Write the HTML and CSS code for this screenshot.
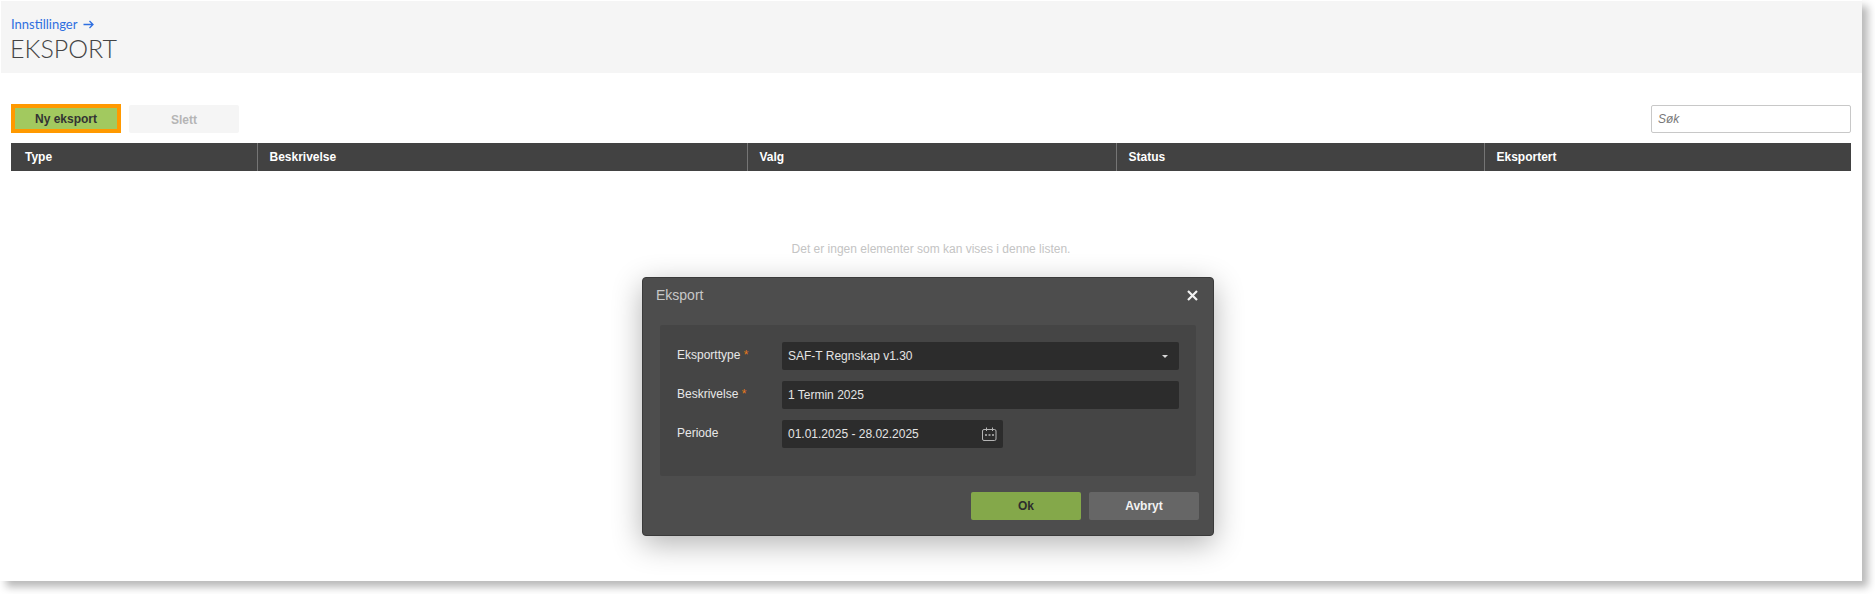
FILE: index.html
```html
<!DOCTYPE html>
<html lang="en">
<head>
    <meta charset="UTF-8">
    <title>Eksport</title>
    <link rel="stylesheet" href="styles.css">
</head>
<body>
    <div class="page">
        <div class="header">
            <a class="crumb" href="#">Innstillinger <span class="crumb-arrow">
                <svg width="11" height="9" viewBox="0 0 11 9"><path d="M0.5 4.5H10M6.5 1L10 4.5L6.5 8" fill="none" stroke="#2f6fe0" stroke-width="1.3"/></svg>
            </span></a>
            <h1>EKSPORT</h1>
        </div>

        <div class="toolbar">
            <button class="btn btn-new">Ny eksport</button>
            <button class="btn btn-delete">Slett</button>
            <input class="search" type="text" placeholder="Søk">
        </div>

        <table class="list-table">
            <thead>
                <tr>
                    <th class="col-type">Type</th>
                    <th class="col-desc">Beskrivelse</th>
                    <th class="col-choice">Valg</th>
                    <th class="col-status">Status</th>
                    <th>Eksportert</th>
                </tr>
            </thead>
        </table>
        <div class="empty">Det er ingen elementer som kan vises i denne listen.</div>

        <div class="dialog">
            <div class="dialog-title">
                <span>Eksport</span>
                <svg class="dialog-close" width="11" height="11" viewBox="0 0 11 11"><path d="M1 1L10 10M10 1L1 10" stroke="#f2f2f2" stroke-width="2.2"/></svg>
            </div>
            <div class="dialog-body">
                <div class="field">
                    <label>Eksporttype <span class="req">*</span></label>
                    <div class="control">
                        <span>SAF-T Regnskap v1.30</span>
                        <span class="caret"></span>
                    </div>
                </div>
                <div class="field">
                    <label>Beskrivelse <span class="req">*</span></label>
                    <div class="control"><span>1 Termin 2025</span></div>
                </div>
                <div class="field">
                    <label>Periode</label>
                    <div class="control control-date">
                        <span>01.01.2025 - 28.02.2025</span>
                        <svg width="15" height="15" viewBox="0 0 15 15" fill="none" stroke="#b5b5b5">
                            <rect x="0.5" y="2.5" width="13.5" height="11" rx="1.5"/>
                            <path d="M4.5 0.5V4M10.5 0.5V4"/>
                            <path d="M3 8H5M6.5 8H8.5M10 8H12" stroke-width="1.6"/>
                        </svg>
                    </div>
                </div>
            </div>
            <div class="dialog-actions">
                <button class="btn btn-ok">Ok</button>
                <button class="btn btn-cancel">Avbryt</button>
            </div>
        </div>
    </div>
</body>
</html>
```

FILE: styles.css
```css
/* Basic styling */
html, body {
    margin: 0;
    padding: 0;
    background-color: #fff;
    height: 100%;
    overflow: hidden;
}

body {
    font-family: "Liberation Sans", Arial, sans-serif;
    font-size: 12px;
}

.page {
    position: relative;
    width: 1862px;
    height: 581px;
    padding-top: 1px;
    box-sizing: border-box;
    background-color: #fff;
    box-shadow: 6px 6px 8px rgba(0, 0, 0, 0.28);
}

.header {
    height: 72px;
    margin-left: 1px;
    padding: 15px 0 0 10px;
    box-sizing: border-box;
    background-color: #f5f5f5;
}

.crumb {
    display: block;
    font-family: Lato, sans-serif;
    font-size: 13px;
    line-height: 16px;
    color: #2f6fe0;
    text-decoration: none;
}

.crumb-arrow {
    margin-left: 2px;
}

.header h1 {
    margin: 1px 0 0 -1px;
    font-family: Lato, sans-serif;
    font-size: 25px;
    font-weight: 300;
    line-height: 30px;
    color: #444;
}

.toolbar {
    display: flex;
    align-items: flex-end;
    gap: 8px;
    height: 29px;
    margin: 31px 11px 0 11px;
}

.btn {
    width: 110px;
    height: 28px;
    padding: 0;
    border: 0;
    border-radius: 2px;
    font-family: "Liberation Sans", Arial, sans-serif;
    font-size: 12px;
    font-weight: bold;
}

.btn-new {
    height: 29px;
    padding-top: 1px;
    border: 4px solid #ff9900;
    border-radius: 0;
    background-color: #a2c95f;
    color: #333;
}

.btn-delete {
    padding-top: 1px;
    background-color: #f5f5f5;
    color: #b5b5b5;
}

.search {
    width: 200px;
    height: 28px;
    margin-left: auto;
    padding: 0 6px;
    box-sizing: border-box;
    border: 1px solid #c8c8c8;
    border-radius: 2px;
    font-family: "Liberation Sans", Arial, sans-serif;
    font-size: 12px;
    font-style: italic;
}

.search::placeholder {
    color: #777;
}

.list-table {
    width: 1840px;
    margin: 10px 0 0 11px;
    border-collapse: collapse;
    table-layout: fixed;
    background-color: #424242;
}

.list-table th {
    height: 28px;
    padding: 0 0 0 12px;
    box-sizing: border-box;
    border-left: 1px solid #757575;
    color: #fff;
    font-size: 12px;
    font-weight: bold;
    text-align: left;
}

.list-table th:first-child {
    border-left: 0;
    padding-left: 14px;
}

.col-type { width: 246px; }
.col-desc { width: 490px; }
.col-choice { width: 369px; }
.col-status { width: 368px; }

.empty {
    margin-top: 71px;
    color: #c4c4c4;
    font-size: 12px;
    line-height: 14px;
    text-align: center;
}

/* Dialog lies over the list */
.dialog {
    position: absolute;
    left: 642px;
    top: 277px;
    width: 572px;
    height: 259px;
    box-sizing: border-box;
    border: 1px solid #3a3a3a;
    border-radius: 4px;
    background-color: #4d4d4d;
    box-shadow: 0 8px 30px rgba(0, 0, 0, 0.3);
}

.dialog-title {
    display: flex;
    justify-content: space-between;
    align-items: flex-start;
    height: 47px;
    padding: 9px 15px 0 13px;
    box-sizing: border-box;
    color: #c8c8c8;
    font-size: 14px;
}

.dialog-close {
    margin-top: 3px;
}

.dialog-body {
    height: 151px;
    margin: 0 17px;
    padding: 17px 17px 0 17px;
    box-sizing: border-box;
    border-radius: 2px;
    background-color: #454545;
}

.field {
    display: flex;
    margin-bottom: 11px;
}

.field label {
    width: 105px;
    padding-top: 6px;
    color: #e8e8e8;
    font-size: 12px;
    line-height: 14px;
}

.req {
    color: #e8791a;
}

.control {
    display: flex;
    flex: 1;
    justify-content: space-between;
    align-items: center;
    height: 28px;
    padding: 0 6px;
    box-sizing: border-box;
    border-radius: 2px;
    background-color: #2c2c2c;
    color: #e4e4e4;
    font-size: 12px;
}

.control-date {
    flex: none;
    width: 221px;
}

.caret {
    width: 0;
    height: 0;
    margin-right: 5px;
    border-left: 3px solid transparent;
    border-right: 3px solid transparent;
    border-top: 3px solid #d8d8d8;
}

.dialog-actions {
    display: flex;
    justify-content: flex-end;
    gap: 8px;
    margin-top: 16px;
    padding-right: 14px;
}

.btn-ok {
    background-color: #84a84a;
    color: #2d2d2d;
}

.btn-cancel {
    background-color: #666;
    color: #f2f2f2;
}
```
